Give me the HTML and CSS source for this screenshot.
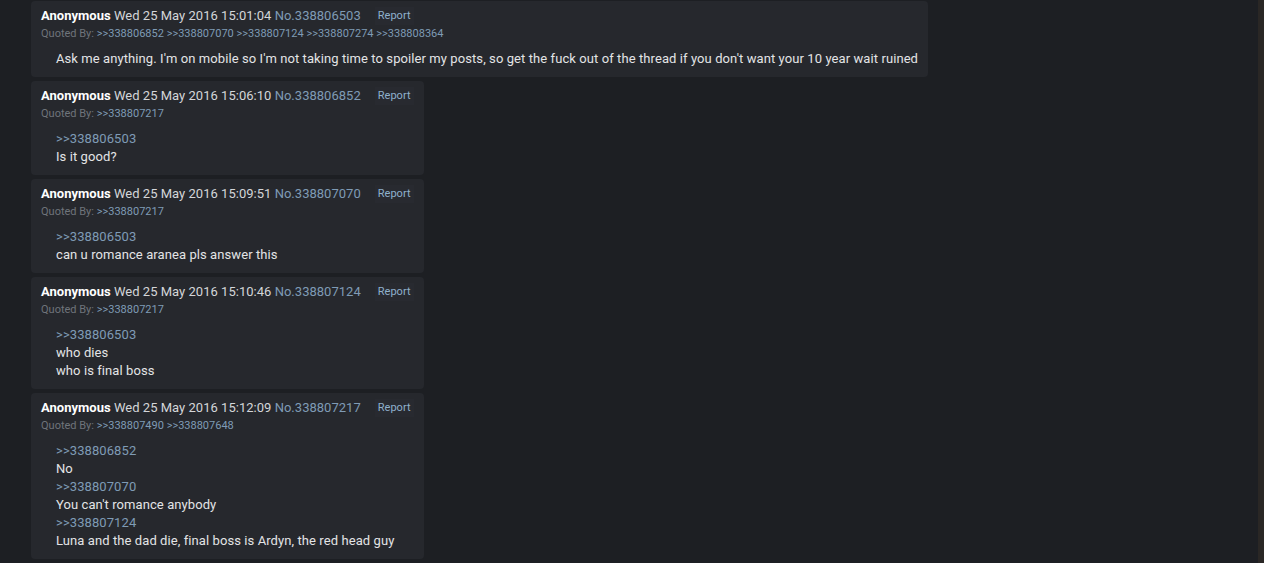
FILE: index.html
```html
<!DOCTYPE html>
<html>
<head>
<meta charset="utf-8">
<link rel="stylesheet" href="styles.css">
</head>
<body>
<div class="page">
  <div class="thread">
    <div class="post">
      <div class="head"><span class="name">Anonymous</span> <span class="date">Wed 25 May 2016 15:01:04</span> <a class="num">No.338806503</a><span class="report">Report</span></div>
      <div class="quoted">Quoted By: <a>&gt;&gt;338806852</a> <a>&gt;&gt;338807070</a> <a>&gt;&gt;338807124</a> <a>&gt;&gt;338807274</a> <a>&gt;&gt;338808364</a></div>
      <div class="body">Ask me anything. I'm on mobile so I'm not taking time to spoiler my posts, so get the fuck out of the thread if you don't want your 10 year wait ruined</div>
    </div>
    <div class="post">
      <div class="head"><span class="name">Anonymous</span> <span class="date">Wed 25 May 2016 15:06:10</span> <a class="num">No.338806852</a><span class="report">Report</span></div>
      <div class="quoted">Quoted By: <a>&gt;&gt;338807217</a></div>
      <div class="body"><a class="ql">&gt;&gt;338806503</a><br>Is it good?</div>
    </div>
    <div class="post">
      <div class="head"><span class="name">Anonymous</span> <span class="date">Wed 25 May 2016 15:09:51</span> <a class="num">No.338807070</a><span class="report">Report</span></div>
      <div class="quoted">Quoted By: <a>&gt;&gt;338807217</a></div>
      <div class="body"><a class="ql">&gt;&gt;338806503</a><br>can u romance aranea pls answer this</div>
    </div>
    <div class="post">
      <div class="head"><span class="name">Anonymous</span> <span class="date">Wed 25 May 2016 15:10:46</span> <a class="num">No.338807124</a><span class="report">Report</span></div>
      <div class="quoted">Quoted By: <a>&gt;&gt;338807217</a></div>
      <div class="body"><a class="ql">&gt;&gt;338806503</a><br>who dies<br>who is final boss</div>
    </div>
    <div class="post">
      <div class="head"><span class="name">Anonymous</span> <span class="date">Wed 25 May 2016 15:12:09</span> <a class="num">No.338807217</a><span class="report">Report</span></div>
      <div class="quoted">Quoted By: <a>&gt;&gt;338807490</a> <a>&gt;&gt;338807648</a></div>
      <div class="body"><a class="ql">&gt;&gt;338806852</a><br>No<br><a class="ql">&gt;&gt;338807070</a><br>You can't romance anybody<br><a class="ql">&gt;&gt;338807124</a><br>Luna and the dad die, final boss is Ardyn, the red head guy</div>
    </div>
  </div>
  <div class="scrollbar"></div>
</div>
</body>
</html>
```

FILE: styles.css
```css
html, body {
  margin: 0;
  padding: 0;
  background: #1d1f23;
  height: 100%;
  overflow: hidden;
}
body {
  font-family: Roboto, "Liberation Sans", sans-serif;
  color: #e6e6e6;
}
.page {
  display: flex;
  height: 563px;
}
.thread {
  flex: 1;
  display: flex;
  flex-direction: column;
  align-items: flex-start;
  gap: 4px;
  padding: 1px 0 0 31px;
}
.post {
  background: #26282d;
  border-radius: 4px;
  padding: 6px 10px 9px 10px;
}
.head {
  font-size: 13px;
  line-height: 18px;
  letter-spacing: 0.02px;
  white-space: nowrap;
}
.name {
  font-weight: 700;
  color: #ffffff;
}
.date {
  color: #d4d6d9;
}
.num {
  color: #7f9bb5;
}
.report {
  display: inline-block;
  margin-left: 14px;
  padding: 0 3px;
  font-size: 11px;
  line-height: 18px;
  color: #8fb0cc;
  background: #282a30;
  vertical-align: top;
}
.quoted {
  font-size: 11px;
  line-height: 18px;
  color: #6f747b;
  white-space: nowrap;
}
.quoted a {
  color: #7f9bb5;
}
.body {
  margin: 7px 0 0 15px;
  font-size: 13px;
  line-height: 18px;
  letter-spacing: 0.085px;
  color: #e3e4e6;
}
.body .ql {
  color: #7f9bb5;
}
.scrollbar {
  width: 6px;
  background: #2a2725;
}
```
